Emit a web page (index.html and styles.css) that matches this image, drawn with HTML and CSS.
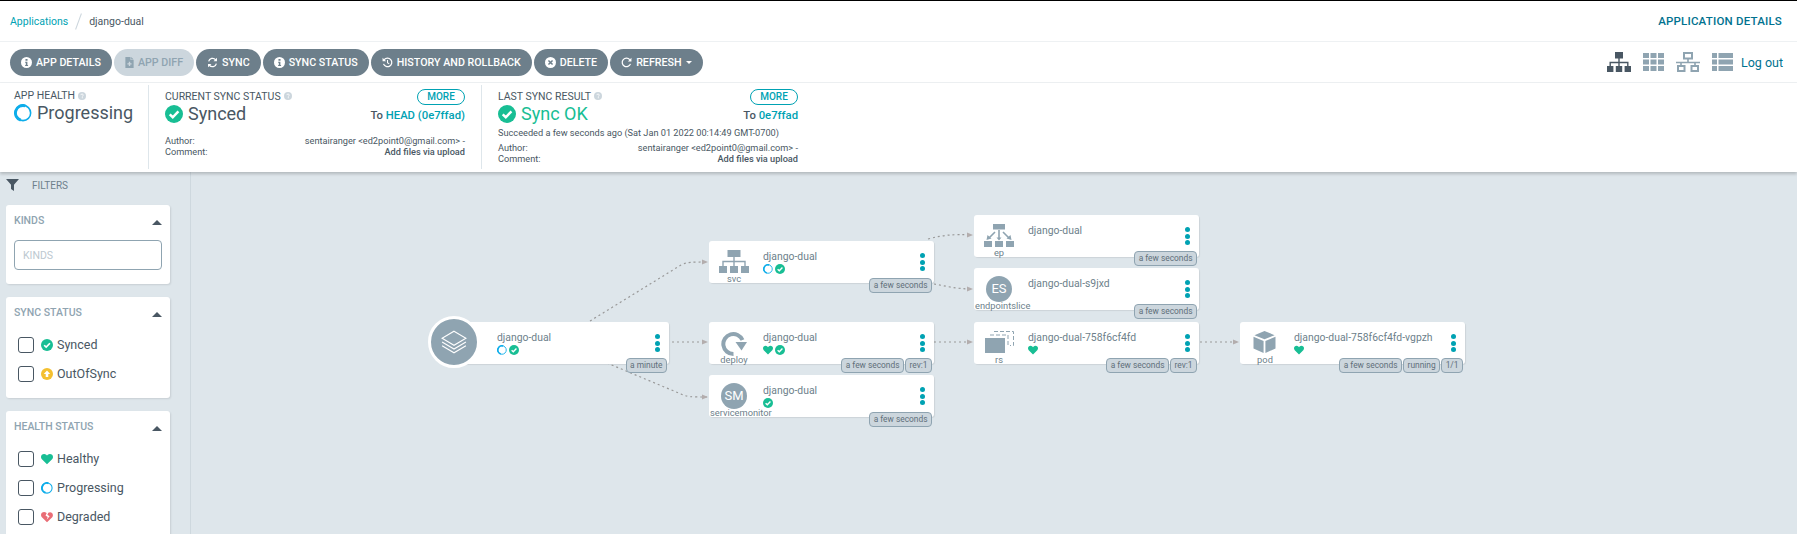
FILE: index.html
```html
<!DOCTYPE html>
<html lang="en">
  <head>
    <meta charset="UTF-8" />
    <title>django-dual</title>
    <link rel="stylesheet" href="styles.css">
  </head>
  <body>
    <svg class="defs" width="0" height="0">
      <symbol id="i-check" viewBox="0 0 16 16"><circle cx="8" cy="8" r="8" fill="#18be94"/><path d="M4.200 8.300l2.700 2.600 5-5.200" fill="none" stroke="#fff" stroke-width="2.200"/></symbol>
      <symbol id="i-ring" viewBox="0 0 16 16"><circle cx="8" cy="8" r="6.800" fill="none" stroke="#0dadea" stroke-width="1.400"/><path d="M10 1.600A6.700 6.700 0 0 0 6 14.400" fill="none" stroke="#0dadea" stroke-width="2.600"/></symbol>
      <symbol id="i-heart" viewBox="0 0 16 14"><path d="M8 14L1.200 7.200C-.4 5.600-.4 3 1.200 1.400 2.800-.2 5.400-.2 7 1.400L8 2.400l1-1c1.600-1.600 4.200-1.600 5.800 0 1.600 1.600 1.600 4.200 0 5.800z" fill="#18be94"/></symbol>
      <symbol id="i-broken" viewBox="0 0 16 14"><path d="M8 14L1.200 7.200C-.4 5.600-.4 3 1.200 1.400 2.800-.2 5.400-.2 7 1.400l.6.6-1.600 3 3 2-1.500 3.500 4-4.500-3-2 1.200-2.600c1.600-1.200 3.700-1 5 .4 1.600 1.600 1.600 4.200 0 5.800z" fill="#e96d76"/></symbol>
      <symbol id="i-up" viewBox="0 0 16 16"><circle cx="8" cy="8" r="8" fill="#f4c030"/><path d="M8 3.300L12.300 8H9.700v4H6.300V8H3.700z" fill="#fff"/></symbol>
      <symbol id="i-info" viewBox="0 0 16 16"><circle cx="8" cy="8" r="8" fill="currentColor"/><path d="M6.500 3h3v2.600h-3zM6 7h3.300v4.500h1V13H6v-1.500h1V8.500H6z" fill="#6d7f8b"/></symbol>
      <symbol id="i-help" viewBox="0 0 16 16"><circle cx="8" cy="8" r="8" fill="#ccd6dd"/><path d="M5.500 6.200C5.700 4.800 6.700 4 8.100 4c1.500 0 2.500.9 2.500 2.100 0 1.800-2 1.700-2 3.300" fill="none" stroke="#fff" stroke-width="1.600"/><path d="M7.600 10.700h2v1.900h-2z" fill="#fff"/></symbol>
      <symbol id="i-doc" viewBox="0 0 12 16"><path d="M0 0h7.500v4.500H12V16H0zM8.500 0L12 3.500H8.500z" fill="#8fa4b1"/><path d="M5 7h2v2h2v2H7v2H5v-2H3V9h2z" fill="#ccd6dd"/></symbol>
      <symbol id="i-sync" viewBox="0 0 16 16"><path d="M2.400 6.500A5.800 5.800 0 0 1 12.500 4M13.600 9.500A5.800 5.800 0 0 1 3.500 12" fill="none" stroke="#fff" stroke-width="1.800"/><path d="M14.500 1v5h-5zM1.500 15v-5h5z" fill="#fff"/></symbol>
      <symbol id="i-history" viewBox="0 0 16 16"><path d="M3.200 4A6.200 6.200 0 1 1 2.200 10" fill="none" stroke="#fff" stroke-width="1.800"/><path d="M.8 1.200L6 6H.8z" fill="#fff"/><path d="M8 4.500V8.300l2.500 1.700" fill="none" stroke="#fff" stroke-width="1.500"/></symbol>
      <symbol id="i-times" viewBox="0 0 16 16"><circle cx="8" cy="8" r="8" fill="#fff"/><path d="M5 5l6 6M11 5l-6 6" stroke="#6d7f8b" stroke-width="2.200"/></symbol>
      <symbol id="i-redo" viewBox="0 0 16 16"><path d="M12.800 4A6.200 6.200 0 1 0 13.800 10" fill="none" stroke="#fff" stroke-width="1.800"/><path d="M15.200 1.200V6.500H10z" fill="#fff"/></symbol>
      <symbol id="i-tree" viewBox="0 0 24 20"><path d="M8 0h8v6.500H8zM0 14h6.400v6H0zM8.800 14h6.400v6H8.800zM17.600 14H24v6h-6.400z" fill="currentColor"/><path d="M12 6v8M3.200 14v-3.500h17.600V14" fill="none" stroke="currentColor" stroke-width="1.400"/></symbol>
      <symbol id="i-grid" viewBox="0 0 21 18"><path d="M0 0h6v5H0zM7.500 0h6v5h-6zM15 0h6v5h-6zM0 6.500h6v5H0zM7.500 6.500h6v5h-6zM15 6.500h6v5h-6zM0 13h6v5H0zM7.500 13h6v5h-6zM15 13h6v5h-6z" fill="currentColor"/></symbol>
      <symbol id="i-net" viewBox="0 0 24 20"><path d="M8 1h8v5.500H8zM2 14h6.500v5H2zM15.500 14H22v5h-6.500z" fill="none" stroke="currentColor" stroke-width="2"/><path d="M0 10.500h24M12 6.500v4M5 10.500V14M19 10.500V14" fill="none" stroke="currentColor" stroke-width="1.600"/></symbol>
      <symbol id="i-list" viewBox="0 0 21 18"><path d="M0 0h5v5H0zM6.500 0H21v5H6.500zM0 6.500h5v5H0zM6.500 6.500H21v5H6.500zM0 13h5v5H0zM6.500 13H21v5H6.500z" fill="currentColor"/></symbol>
      <symbol id="i-filter" viewBox="0 0 14 13"><path d="M0 0h14L8.600 6.200V13L5.400 10.700V6.200z" fill="#495763"/></symbol>
      <symbol id="i-layers" viewBox="0 0 24 24"><path d="M12 2L23 8.500 12 15 1 8.500z M1 12l11 6.500L23 12M1 15.500L12 22l11-6.500" fill="none" stroke="#fff" stroke-width="1"/></symbol>
      <symbol id="i-svc" viewBox="0 0 30 23"><path d="M8.500 0h13v7h-13zM0 16h8v7H0zM11 16h8v7h-8zM22 16h8v7h-8z" fill="#8fa4b1"/><path d="M15 7v9M4 16v-4.500h22V16" fill="none" stroke="#8fa4b1" stroke-width="1.400"/></symbol>
      <symbol id="i-deploy" viewBox="0 0 26 26"><path d="M12.500 23A10 10 0 1 1 21.500 9" fill="none" stroke="#8fa4b1" stroke-width="4"/><path d="M26 11H14.500L20.500 19.500z" fill="#8fa4b1"/></symbol>
      <symbol id="i-ep" viewBox="0 0 30 23"><path d="M9 0h12v5.500H9zM0 17h8v6H0zM11 17h8v6h-8zM22 17h8v6h-8z" fill="#8fa4b1"/><path d="M15 6v9M11 8L5 14M19 8l6 6" fill="none" stroke="#8fa4b1" stroke-width="1.600"/><path d="M12.500 13.500h5L15 16.500zM2.500 16l1-5 4 3.500zM27.500 16l-1-5-4 3.500z" fill="#8fa4b1"/></symbol>
      <symbol id="i-rs" viewBox="0 0 29 22"><path d="M9 .5h19.500v14H25M5 4h18v11" fill="none" stroke="#8fa4b1" stroke-width="1" stroke-dasharray="4 2"/><path d="M0 7h20v15H0z" fill="#8fa4b1"/></symbol>
      <symbol id="i-pod" viewBox="0 0 24 24"><path d="M12 0L23 4.500 12 9 1 4.500zM0 6.300l11 4.500V24L0 19zM24 6.300l-11 4.500V24l11-5z" fill="#8fa4b1"/></symbol>
    </svg>

    <header class="topbar">
      <nav class="crumbs">
        <a class="link">Applications</a>
        <span class="crumb-sep"></span>
        <span>django-dual</span>
      </nav>
      <div class="page-title">APPLICATION DETAILS</div>
    </header>

    <div class="toolbar">
      <div class="btn-row">
        <button class="btn"><svg class="ico info-w"><use href="#i-info"/></svg>APP DETAILS</button>
        <button class="btn btn-off"><svg class="ico doc"><use href="#i-doc"/></svg>APP DIFF</button>
        <button class="btn"><svg class="ico"><use href="#i-sync"/></svg>SYNC</button>
        <button class="btn"><svg class="ico info-w"><use href="#i-info"/></svg>SYNC STATUS</button>
        <button class="btn"><svg class="ico"><use href="#i-history"/></svg>HISTORY AND ROLLBACK</button>
        <button class="btn"><svg class="ico"><use href="#i-times"/></svg>DELETE</button>
        <button class="btn"><svg class="ico"><use href="#i-redo"/></svg>REFRESH<span class="btn-caret"></span></button>
      </div>
      <div class="views">
        <svg class="view view-on view-tree"><use href="#i-tree"/></svg>
        <svg class="view view-grid"><use href="#i-grid"/></svg>
        <svg class="view view-tree"><use href="#i-net"/></svg>
        <svg class="view view-grid"><use href="#i-list"/></svg>
        <a class="logout">Log out</a>
      </div>
    </div>

    <section class="status">
      <div class="st-col st-health">
        <div class="st-label">APP HEALTH <svg class="help"><use href="#i-help"/></svg></div>
        <div class="st-big"><svg class="big-ico"><use href="#i-ring"/></svg>Progressing</div>
      </div>
      <div class="st-col st-sync">
        <div class="st-head">
          <div class="st-label">CURRENT SYNC STATUS <svg class="help"><use href="#i-help"/></svg></div>
          <span class="more">MORE</span>
        </div>
        <div class="st-main">
          <div class="st-big"><svg class="big-ico"><use href="#i-check"/></svg>Synced</div>
          <div class="st-to">To <a class="link">HEAD (0e7ffad)</a></div>
        </div>
        <div class="st-meta st-meta-gap">
          <div class="meta-row"><span>Author:</span><span>sentairanger &lt;ed2point0@gmail.com&gt; -</span></div>
          <div class="meta-row"><span>Comment:</span><span class="meta-strong">Add files via upload</span></div>
        </div>
      </div>
      <div class="st-col st-sync st-last">
        <div class="st-head">
          <div class="st-label">LAST SYNC RESULT <svg class="help"><use href="#i-help"/></svg></div>
          <span class="more">MORE</span>
        </div>
        <div class="st-main">
          <div class="st-big st-ok"><svg class="big-ico"><use href="#i-check"/></svg>Sync OK</div>
          <div class="st-to">To <a class="link">0e7ffad</a></div>
        </div>
        <div class="st-when">Succeeded a few seconds ago (Sat Jan 01 2022 00:14:49 GMT-0700)</div>
        <div class="st-meta">
          <div class="meta-row"><span>Author:</span><span>sentairanger &lt;ed2point0@gmail.com&gt; -</span></div>
          <div class="meta-row"><span>Comment:</span><span class="meta-strong">Add files via upload</span></div>
        </div>
      </div>
    </section>

    <main class="main">
      <aside class="filters">
        <div class="filters-title"><svg class="filter-ico"><use href="#i-filter"/></svg>FILTERS</div>
        <div class="card">
          <div class="card-head">KINDS<span class="card-caret"></span></div>
          <input class="kinds-input" placeholder="KINDS" />
        </div>
        <div class="card">
          <div class="card-head">SYNC STATUS<span class="card-caret"></span></div>
          <label class="check-row"><span class="box"></span><svg class="row-ico"><use href="#i-check"/></svg>Synced</label>
          <label class="check-row"><span class="box"></span><svg class="row-ico"><use href="#i-up"/></svg>OutOfSync</label>
        </div>
        <div class="card">
          <div class="card-head">HEALTH STATUS<span class="card-caret"></span></div>
          <label class="check-row"><span class="box"></span><svg class="row-ico"><use href="#i-heart"/></svg>Healthy</label>
          <label class="check-row"><span class="box"></span><svg class="row-ico"><use href="#i-ring"/></svg>Progressing</label>
          <label class="check-row"><span class="box"></span><svg class="row-ico"><use href="#i-broken"/></svg>Degraded</label>
        </div>
      </aside>

      <div class="graph">
        <svg class="edges" width="1606" height="362">
          <path class="edge" d="M399 149L490 93C496 90 500 90 516 90"/>
          <path class="edge" d="M481 170H516"/>
          <path class="edge" d="M416 191L490 222C496 225 500 225 516 225"/>
          <path class="edge" d="M737 67C752 63 762 62 781 63"/>
          <path class="edge" d="M743 112C755 114 765 117 781 117"/>
          <path class="edge" d="M743 170H781"/>
          <path class="edge" d="M1009 170H1047"/>
          <path class="arrow" d="M511 87.500l6 2.500-6 2.500zM511 167.500l6 2.500-6 2.500zM511 222.500l6 2.500-6 2.500zM776 60.500l6 2.500-6 2.500zM776 114.500l6 2.500-6 2.500zM776 167.500l6 2.500-6 2.500zM1042 167.500l6 2.500-6 2.500z"/>
        </svg>

        <div class="node node-root">
          <div class="root-circle"><svg class="root-ico"><use href="#i-layers"/></svg></div>
          <div class="node-info">
            <div class="node-name">django-dual</div>
            <div class="node-icons"><svg class="st-ico"><use href="#i-ring"/></svg><svg class="st-ico"><use href="#i-check"/></svg></div>
          </div>
          <div class="dots"><i></i><i></i><i></i></div>
          <div class="tags"><span class="tag">a minute</span></div>
        </div>

        <div class="node node-svc">
          <div class="node-kind"><svg class="kind-ico"><use href="#i-svc"/></svg><span class="kind-label">svc</span></div>
          <div class="node-info">
            <div class="node-name">django-dual</div>
            <div class="node-icons"><svg class="st-ico"><use href="#i-ring"/></svg><svg class="st-ico"><use href="#i-check"/></svg></div>
          </div>
          <div class="dots"><i></i><i></i><i></i></div>
          <div class="tags"><span class="tag">a few seconds</span></div>
        </div>

        <div class="node node-deploy">
          <div class="node-kind"><svg class="kind-ico k-round"><use href="#i-deploy"/></svg><span class="kind-label">deploy</span></div>
          <div class="node-info">
            <div class="node-name">django-dual</div>
            <div class="node-icons"><svg class="st-ico"><use href="#i-heart"/></svg><svg class="st-ico"><use href="#i-check"/></svg></div>
          </div>
          <div class="dots"><i></i><i></i><i></i></div>
          <div class="tags"><span class="tag">a few seconds</span><span class="tag">rev:1</span></div>
        </div>

        <div class="node node-sm">
          <div class="node-kind"><span class="kind-circle">SM</span><span class="kind-label">servicemonitor</span></div>
          <div class="node-info">
            <div class="node-name">django-dual</div>
            <div class="node-icons"><svg class="st-ico"><use href="#i-check"/></svg></div>
          </div>
          <div class="dots"><i></i><i></i><i></i></div>
          <div class="tags"><span class="tag">a few seconds</span></div>
        </div>

        <div class="node node-ep">
          <div class="node-kind"><svg class="kind-ico"><use href="#i-ep"/></svg><span class="kind-label">ep</span></div>
          <div class="node-info">
            <div class="node-name">django-dual</div>
          </div>
          <div class="dots"><i></i><i></i><i></i></div>
          <div class="tags"><span class="tag">a few seconds</span></div>
        </div>

        <div class="node node-es">
          <div class="node-kind"><span class="kind-circle">ES</span><span class="kind-label">endpointslice</span></div>
          <div class="node-info">
            <div class="node-name">django-dual-s9jxd</div>
          </div>
          <div class="dots"><i></i><i></i><i></i></div>
          <div class="tags"><span class="tag">a few seconds</span></div>
        </div>

        <div class="node node-rs">
          <div class="node-kind"><svg class="kind-ico k-rs"><use href="#i-rs"/></svg><span class="kind-label">rs</span></div>
          <div class="node-info">
            <div class="node-name">django-dual-758f6cf4fd</div>
            <div class="node-icons"><svg class="st-ico"><use href="#i-heart"/></svg></div>
          </div>
          <div class="dots"><i></i><i></i><i></i></div>
          <div class="tags"><span class="tag">a few seconds</span><span class="tag">rev:1</span></div>
        </div>

        <div class="node node-pod">
          <div class="node-kind"><svg class="kind-ico k-pod"><use href="#i-pod"/></svg><span class="kind-label">pod</span></div>
          <div class="node-info">
            <div class="node-name">django-dual-758f6cf4fd-vgpzh</div>
            <div class="node-icons"><svg class="st-ico"><use href="#i-heart"/></svg></div>
          </div>
          <div class="dots"><i></i><i></i><i></i></div>
          <div class="tags"><span class="tag">a few seconds</span><span class="tag">running</span><span class="tag">1/1</span></div>
        </div>
      </div>
    </main>
  </body>
</html>
```

FILE: styles.css
```css
* {
  margin: 0;
  padding: 0;
  box-sizing: border-box;
  font-family: Roboto, sans-serif;
}

html,
body {
  height: 100%;
  overflow: hidden;
}

body {
  background: #dee6eb;
  color: #495763;
  display: flex;
  flex-direction: column;
}

.defs {
  position: absolute;
}

.link {
  color: #00a2b3;
}

/* top bar */
.topbar {
  height: 42px;
  flex: none;
  background: white;
  border-top: 1px solid #000;
  border-bottom: 1px solid #eef1f3;
  display: flex;
  align-items: center;
  justify-content: space-between;
  padding: 0 15px 0 10px;
}

.crumbs {
  display: flex;
  align-items: center;
  font-size: 10.5px;
}

.crumb-sep {
  width: 1px;
  height: 17px;
  margin: 0 10px;
  background: #ccd6dd;
  transform: rotate(20deg);
}

.page-title {
  font-size: 11.5px;
  font-weight: 500;
  color: #00728f;
  letter-spacing: 0.2px;
}

/* toolbar */
.toolbar {
  height: 41px;
  flex: none;
  background: white;
  border-bottom: 1px solid #eef1f3;
  display: flex;
  align-items: center;
  justify-content: space-between;
  padding: 0 14px 0 10px;
}

.btn-row {
  display: flex;
  gap: 2px;
}

.btn {
  height: 27px;
  border: none;
  border-radius: 14px;
  background: #6d7f8b;
  color: white;
  font-size: 10.7px;
  font-weight: 500;
  display: flex;
  align-items: center;
  padding: 0 11px;
}

.btn-off {
  background: #ccd6dd;
  color: #8fa4b1;
}

.ico {
  width: 11px;
  height: 11px;
  margin-right: 4px;
  flex: none;
}

.info-w {
  color: white;
}

.doc {
  width: 9px;
}

.btn-caret {
  margin-left: 4px;
  border: 3.5px solid transparent;
  border-top-color: white;
  border-bottom: none;
}

.views {
  display: flex;
  align-items: center;
}

.view {
  color: #8fa4b1;
  flex: none;
}

.view-on {
  color: #495763;
}

.view-tree {
  width: 24px;
  height: 20px;
  margin-right: 12px;
}

.view-grid {
  width: 21px;
  height: 18px;
  margin-right: 12px;
}

.logout {
  margin-left: -4px;
  font-size: 12.5px;
  color: #00728f;
}

/* status panel */
.status {
  height: 89px;
  flex: none;
  background: white;
  display: flex;
  align-items: stretch;
  padding: 2px 0 3px;
  box-shadow: 0 2px 3px rgba(0, 0, 0, 0.2);
  position: relative;
}

.st-col {
  padding: 4px 16px 0 14px;
}

.st-health {
  width: 148px;
  padding-right: 0;
}

.st-sync {
  width: 333px;
  border-left: 1px solid #dee6eb;
  padding: 4px 16px 0 16px;
}

.st-label {
  font-size: 10.5px;
  display: flex;
  align-items: center;
  gap: 3px;
  color: #495763;
}

.st-head .st-label {
  margin-top: -2px;
}

.help {
  width: 8px;
  height: 8px;
}

.st-head {
  display: flex;
  justify-content: space-between;
  align-items: center;
  height: 16px;
}

.more {
  width: 48px;
  height: 16px;
  border: 1px solid #00a2b3;
  border-radius: 9px;
  color: #00a2b3;
  font-size: 10px;
  font-weight: 500;
  text-align: center;
  line-height: 14px;
}

.st-big {
  font-size: 18px;
  display: flex;
  align-items: center;
  gap: 5px;
  line-height: 22px;
}

.big-ico {
  width: 18px;
  height: 18px;
  flex: none;
}

.st-ok {
  color: #18be94;
}

.st-main {
  display: flex;
  justify-content: space-between;
  align-items: center;
  margin-top: -3px;
  height: 24px;
}

.st-to {
  font-size: 11.3px;
  font-weight: 500;
  margin-top: 2px;
}

.st-when {
  font-size: 9.2px;
  line-height: 12px;
  margin-top: 1px;
}

.st-meta {
  font-size: 9.2px;
  margin-top: 2.5px;
  line-height: 11px;
}

.st-meta-gap {
  margin-top: 8.5px;
}

.meta-row {
  display: flex;
  justify-content: space-between;
}

.meta-strong {
  font-weight: 500;
}

/* left filters */
.main {
  flex: 1;
  display: flex;
  min-height: 0;
}

.filters {
  width: 191px;
  flex: none;
  border-right: 1px solid #ced8de;
  padding: 0 20px 0 6px;
  background: #dee6eb;
}

.filters-title {
  height: 33px;
  padding-bottom: 7px;
  display: flex;
  align-items: center;
  font-size: 10px;
  color: #6d7f8b;
}

.filter-ico {
  width: 13px;
  height: 12px;
  margin-right: 13px;
}

.card {
  width: 164px;
  background: white;
  border-radius: 3px;
  box-shadow: 1px 1px 2px rgba(0, 0, 0, 0.1);
  padding: 8px 8px 10px;
  margin-bottom: 13px;
}

.card-head {
  font-size: 10.5px;
  font-weight: 500;
  color: #8fa4b1;
  display: flex;
  justify-content: space-between;
  align-items: center;
  height: 14px;
  margin-bottom: 11px;
}

.card-caret {
  border: 5px solid transparent;
  border-bottom-color: #495763;
  border-top: none;
  margin-top: 4px;
}

.kinds-input {
  display: block;
  width: 148px;
  height: 30px;
  border: 1px solid #8fa4b1;
  border-radius: 4px;
  padding: 0 8px;
  font-size: 10.5px;
  margin: 13px 0 4px;
}

.kinds-input::placeholder {
  color: #bcc8d0;
}

.check-row {
  display: flex;
  align-items: center;
  height: 29px;
  padding-left: 4px;
  font-size: 12.5px;
}

.box {
  width: 16px;
  height: 16px;
  border: 1px solid #495763;
  border-radius: 3px;
  margin-right: 7px;
}

.row-ico {
  width: 12px;
  height: 12px;
  margin-right: 4px;
}

/* graph */
.graph {
  flex: 1;
  position: relative;
  overflow: hidden;
}

.edges {
  position: absolute;
  left: 0;
  top: 0;
}

.edge {
  fill: none;
  stroke: #999;
  stroke-width: 1.2;
  stroke-dasharray: 2 3;
}

.arrow {
  fill: #b3adad;
}

.node {
  position: absolute;
  width: 225px;
  height: 42px;
  background: white;
  border-radius: 3px;
  box-shadow: 1px 1px 1px rgba(0, 0, 0, 0.08);
  display: flex;
}

.node-root {
  left: 263px;
  top: 150px;
  width: 215px;
}

.node-svc {
  left: 518px;
  top: 69px;
}

.node-deploy {
  left: 518px;
  top: 150px;
}

.node-sm {
  left: 518px;
  top: 203px;
}

.node-ep {
  left: 783px;
  top: 43px;
}

.node-es {
  left: 783px;
  top: 96px;
}

.node-rs {
  left: 783px;
  top: 150px;
}

.node-pod {
  left: 1049px;
  top: 150px;
}

.root-circle {
  position: absolute;
  left: -26px;
  top: -6px;
  width: 52px;
  height: 52px;
  border-radius: 50%;
  border: 3px solid white;
  background: #8fa4b1;
  display: flex;
  align-items: center;
  justify-content: center;
}

.root-ico {
  width: 26px;
  height: 26px;
}

.node-root .node-info {
  margin-left: 43px;
}

.node-kind {
  width: 50px;
  flex: none;
  position: relative;
}

.kind-ico {
  position: absolute;
  left: 10px;
  top: 9px;
  width: 30px;
  height: 23px;
}

.k-round {
  left: 12px;
  width: 26px;
  height: 26px;
}

.k-rs {
  left: 11px;
  width: 29px;
  height: 22px;
}

.k-pod {
  left: 13px;
  width: 23px;
  height: 22px;
}

.kind-circle {
  position: absolute;
  left: 12px;
  top: 8px;
  width: 26px;
  height: 26px;
  border-radius: 50%;
  background: #8fa4b1;
  color: white;
  font-size: 13px;
  text-align: center;
  line-height: 26px;
}

.kind-label {
  position: absolute;
  left: 1px;
  width: 48px;
  top: 30.5px;
  text-align: center;
  white-space: nowrap;
  font-size: 9.3px;
  line-height: 14px;
  color: #6d7f8b;
}

.node-info {
  margin-left: 4px;
  padding-top: 9px;
  flex: 1;
}

.node-name {
  font-size: 10.4px;
  line-height: 14px;
  color: #6d7f8b;
}

.node-icons {
  display: flex;
  gap: 2px;
  height: 11px;
}

.st-ico {
  width: 10px;
  height: 10px;
}

.dots {
  width: 5px;
  margin: 12px 9px 0 0;
  display: flex;
  flex-direction: column;
  gap: 1.5px;
}

.dots i {
  width: 5px;
  height: 5px;
  border-radius: 50%;
  background: #00a2b3;
}

.tags {
  position: absolute;
  right: 2px;
  top: 36px;
  display: flex;
  gap: 1px;
}

.node-svc .tags,
.node-sm .tags {
  top: 37px;
}

.tag {
  height: 15px;
  border: 1px solid #8fa4b1;
  border-radius: 4px;
  background: #ccd6dd;
  color: #5f6f7a;
  font-size: 8.4px;
  line-height: 13px;
  padding: 0 3.5px;
}
```
